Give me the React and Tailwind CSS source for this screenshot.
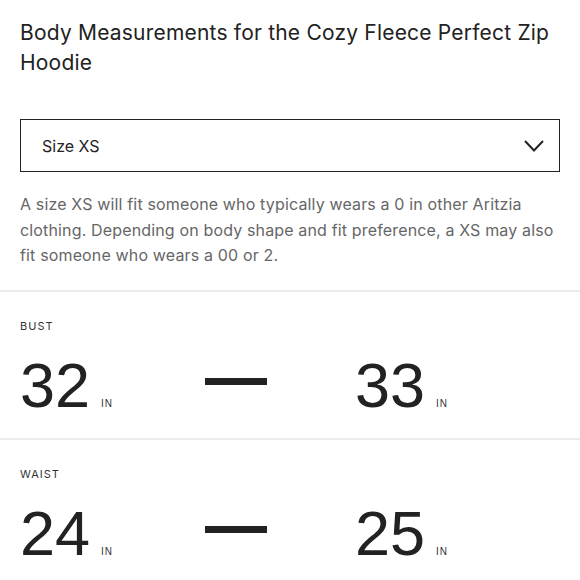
const sections = [
  { label: "BUST", min: "32", max: "33" },
  { label: "WAIST", min: "24", max: "25" },
];

function Value({ n }) {
  return (
    <div className="flex items-baseline">
      <span className="text-[63px] leading-none text-[#222] font-['Liberation_Sans',Arial,sans-serif]">
        {n}
      </span>
      <span className="ml-[11px] text-[10px] tracking-[1px] text-[#333] font-['Liberation_Sans',Arial,sans-serif]">
        IN
      </span>
    </div>
  );
}

export default function App() {
  return (
    <div className="w-[580px] bg-white font-['Inter',sans-serif] text-[#222]">
      <div className="px-5 pt-[18px]">
        <h1 className="text-[21px] leading-[30px] font-normal tracking-[0.2px]">
          Body Measurements for the Cozy Fleece Perfect Zip Hoodie
        </h1>

        <div className="mt-[41px] h-[53px] border-[1.5px] border-[#222] flex items-center justify-between pl-[21px] pr-[15px]">
          <span className="text-[16px]">Size XS</span>
          <svg width="20" height="12" viewBox="0 0 20 12" fill="none">
            <polyline
              points="1,1 10,10.5 19,1"
              stroke="#222"
              strokeWidth="2"
            />
          </svg>
        </div>

        <p className="mt-[20px] text-[16px] leading-[25.5px] tracking-[0.15px] text-[#666]">
          A size XS will fit someone who typically wears a 0 in other Aritzia
          clothing. Depending on body shape and fit preference, a XS may also
          fit someone who wears a 00 or 2.
        </p>
      </div>

      <div className="mt-[21px]">
        {sections.map((s) => (
          <div key={s.label} className="border-t-2 border-[#ebebeb] px-5 pt-[26px] pb-[21px]">
            <p className="text-[11px] leading-4 tracking-[1px] text-[#333]">
              {s.label}
            </p>
            <div className="mt-[20px] flex">
              <div className="w-[185px]">
                <Value n={s.min} />
              </div>
              <div className="w-[150px]">
                <div className="mt-[24px] w-[62px] h-[7px] bg-[#222]" />
              </div>
              <Value n={s.max} />
            </div>
          </div>
        ))}
      </div>
    </div>
  );
}
